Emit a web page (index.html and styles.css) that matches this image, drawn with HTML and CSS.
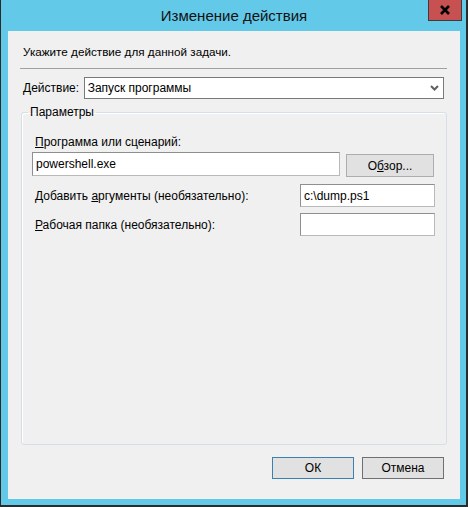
FILE: index.html
```html
<!DOCTYPE html>
<html lang="ru">
<head>
  <meta charset="UTF-8">
  <title>Изменение действия</title>
  <link rel="stylesheet" href="styles.css">
</head>
<body>

  <div class="window">
    <div class="titlebar">
      <span></span>
      <span class="title">Изменение действия</span>
      <button class="close" type="button">
        <svg width="12" height="10" viewBox="0 0 12 10">
          <path d="M2 1 L10 9 M10 1 L2 9" stroke="#000" stroke-width="2.6" fill="none"/>
        </svg>
      </button>
    </div>

    <div class="client">
      <p class="intro">Укажите действие для данной задачи.</p>
      <div class="separator"></div>

      <div class="action-row">
        <label class="action-label"><u>Д</u>ействие:</label>
        <div class="select">
          <span>Запуск программы</span>
          <svg width="9" height="6" viewBox="0 0 9 6">
            <path d="M1 1 L4.5 4.5 L8 1" stroke="#606060" stroke-width="2" fill="none"/>
          </svg>
        </div>
      </div>

      <fieldset class="group">
        <legend>Параметры</legend>

        <label class="field-label"><u>П</u>рограмма или сценарий:</label>
        <div class="program-row">
          <input class="text-input wide" type="text" value="powershell.exe">
          <button class="btn" type="button">О<u>б</u>зор...</button>
        </div>

        <div class="option-row">
          <label class="field-label">Добавить <u>а</u>ргументы (необязательно):</label>
          <input class="text-input short" type="text" value="c:\dump.ps1">
        </div>
        <div class="option-row">
          <label class="field-label"><u>Р</u>абочая папка (необязательно):</label>
          <input class="text-input short" type="text" value="">
        </div>
      </fieldset>

      <div class="footer">
        <button class="btn default" type="button">ОК</button>
        <button class="btn" type="button">Отмена</button>
      </div>
    </div>
  </div>

</body>
</html>
```

FILE: styles.css
```css
body {
  margin: 0;
  font-family: "Liberation Sans", Arial, sans-serif;
  font-size: 12px;
  color: #000;
}

.window {
  width: 468px;
  height: 507px;
  box-sizing: border-box;
  background-color: #63c9e9;
  border-left: 1px solid #2b2b2b;
  border-right: 2px solid #2b2b2b;
  border-bottom: 2px solid #2b2b2b;
  display: flex;
  flex-direction: column;
}

.titlebar {
  height: 31px;
  display: grid;
  grid-template-columns: 1fr auto 1fr;
  align-items: start;
}

.title {
  font-size: 15px;
  line-height: 31px;
  color: #111;
  padding-left: 1px;
}

.close {
  justify-self: end;
  margin-right: 4px;
  width: 34px;
  height: 21px;
  padding: 0;
  background-color: #c75050;
  border: 1px solid #3c3c3c;
  border-top: none;
  display: flex;
  align-items: center;
  justify-content: center;
}

.client {
  margin: 0 6px 6px 7px;
  flex: 1;
  background-color: #f0f0f0;
  display: flex;
  flex-direction: column;
  padding: 0 16px 0 13px;
}

.intro {
  margin: 13px 0 0 2px;
  line-height: 16px;
  font-size: 11.7px;
}

.separator {
  margin-top: 8px;
  height: 1px;
  background-color: #a0a0a0;
  width: 427px;
  margin-left: -1px;
}

.action-row {
  margin-top: 8px;
  display: flex;
  align-items: center;
}

.action-label {
  width: 64px;
  padding-left: 2px;
}

.select {
  width: 368px;
  height: 22px;
  box-sizing: border-box;
  border: 1px solid #7a7a7a;
  background-color: #fff;
  display: flex;
  align-items: center;
  justify-content: space-between;
  padding: 0 4px 0 3px;
  margin-left: -2px;
}

.group {
  margin: 5px 0 0 0;
  padding: 0;
  width: 426px;
  height: 341px;
  box-sizing: border-box;
  border: 1px solid #d5dfe5;
  border-radius: 3px;
  box-shadow: inset 1px 1px 0 #fff;
  min-inline-size: 0;
}

.group legend {
  margin-left: 6px;
  padding: 0 2px;
  line-height: 16px;
}

.field-label {
  display: block;
  line-height: 16px;
}

.group > .field-label {
  margin: 14px 0 0 13px;
}

.program-row {
  margin: 2px 0 0 10px;
  display: flex;
  align-items: flex-start;
}

.text-input {
  height: 24px;
  box-sizing: border-box;
  border: 1px solid #abadb3;
  border-color: #8e8f8f #b9b9b9 #b9b9b9 #8e8f8f;
  background-color: #fff;
  font-family: inherit;
  font-size: 12px;
  padding: 0 3px;
  margin: 0;
  color: #000;
}

.wide {
  width: 308px;
}

.short {
  width: 135px;
  height: 23px;
}

.btn {
  height: 23px;
  box-sizing: border-box;
  background-color: #e1e1e1;
  border: 1px solid #adadad;
  font-family: inherit;
  font-size: 12px;
  color: #000;
  padding: 0;
}

.program-row .btn {
  width: 88px;
  margin: 2px 0 0 6px;
}

.option-row {
  display: flex;
  justify-content: space-between;
  align-items: center;
  padding: 0 11px 0 13px;
  margin-top: 7px;
}

.option-row + .option-row {
  margin-top: 6px;
}

.footer {
  margin-top: 12px;
  display: flex;
  justify-content: flex-end;
  gap: 8px;
}

.footer .btn {
  width: 82px;
  height: 22px;
  border-color: #707070;
}

.footer .default {
  border-color: #3c7fb1;
}
```
